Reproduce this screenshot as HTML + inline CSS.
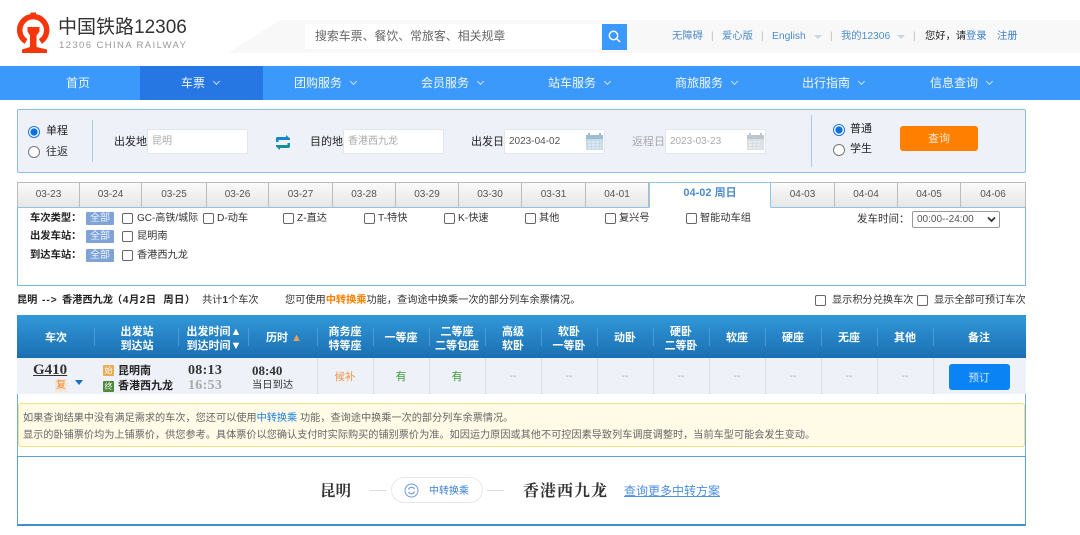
<!DOCTYPE html>
<html lang="zh"><head><meta charset="utf-8"><title>中国铁路12306</title>
<style>
html,body{margin:0;padding:0;background:#fff}
#p{position:relative;width:1080px;height:535px;overflow:hidden;background:#fff;font:11px/14px "Liberation Sans","Noto Sans CJK SC",sans-serif;color:#333;filter:blur(.35px)}
.t{position:absolute;white-space:nowrap}
.c{position:absolute;white-space:nowrap;transform:translateX(-50%);text-align:center}
.b{position:absolute;box-sizing:border-box}
.nav{color:#fff;font-size:12px;top:76px;line-height:15px;opacity:.93}
.ar{display:inline-block;width:4px;height:4px;border-right:1.3px solid #dbeafe;border-bottom:1.3px solid #dbeafe;transform:rotate(45deg);margin:0 0 3px 9px}
.tl{color:#4d8ccd;font-size:10.3px;top:30px}
.sp{color:#bbb;font-size:10px;top:30px}
.tab{position:absolute;top:182px;height:26px;box-sizing:border-box;border:1px solid #bbb;border-left:0;border-bottom:1px solid #8fc4e8;background:linear-gradient(#fafafa,#e6e6e6);text-align:center;line-height:24px;font-size:10px;color:#555}
.cb{position:absolute;width:9px;height:9px;border:1px solid #666;border-radius:2px;background:#fff}
.all{position:absolute;left:86px;width:28px;height:13px;background:#7fa3d6;color:#eaf2ff;font-size:10px;line-height:13px;text-align:center;border-radius:1px}
.fl{position:absolute;left:30px;font-weight:700;color:#222;font-size:10.3px;line-height:14px}
.f{position:absolute;white-space:nowrap;font-size:10.2px;line-height:14px}
.h{color:#fff;font-weight:700;font-size:11px;line-height:13.5px}
.sep{position:absolute;top:328px;width:1px;height:18px;background:#4d9ad4}
.vl{position:absolute;top:358px;width:1px;height:36px;background:#d7dfe9}
.d{color:#aaa;font-size:10px;top:370px}
.r{width:10px;height:10px;border-radius:50%;border:1px solid #777;background:#fff;position:absolute;box-sizing:content-box}
.r.on{border-color:#1a73e8;background:radial-gradient(circle,#0b6fe0 0 3.3px,#fff 3.9px)}
</style></head><body><div id="p">

<svg class="b" style="left:0;top:0" width="70" height="60" viewBox="0 0 70 60">
<path d="M26 41.500A13.500 13.500 0 1 1 40.400 41.500" fill="none" stroke="#f3360c" stroke-width="5.500"/>
<rect x="30.500" y="12.500" width="5.500" height="5" fill="#f3360c"/>
<path d="M27.500 27H39.500V31.500L36.500 35.500V47L47 49.500V53H22V49.500L30 47V35.500L27.500 31.500Z" fill="#f3360c"/>
</svg>
<div class="t" style="left:58px;top:15px;font-size:19px;line-height:26px;color:#333">中国铁路12306</div>
<div class="t" style="left:59px;top:40px;font-size:9.500px;line-height:12px;letter-spacing:1.400px;color:#999">12306 CHINA RAILWAY</div>

<svg class="b" style="left:225px;top:20px" width="855" height="33"><path d="M3 33L55 0H855V33Z" fill="#f8f8f8"/></svg>
<div class="b" style="left:305px;top:24px;width:298px;height:25px;background:#fff"></div>
<div class="t" style="left:315px;top:29px;color:#666;font-size:11.900px">搜索车票、餐饮、常旅客、相关规章</div>
<div class="b" style="left:602px;top:24px;width:25px;height:26px;background:#3b99fc"></div>
<svg class="b" style="left:607px;top:29px" width="15" height="15" viewBox="0 0 15 15"><circle cx="6.500" cy="6.500" r="4.200" fill="none" stroke="#fff" stroke-width="1.500"/><path d="M9.500 9.500L13 13" stroke="#fff" stroke-width="1.500"/></svg>

<span class="t tl" style="left:672px">无障碍</span><span class="t sp" style="left:711px">|</span>
<span class="t tl" style="left:722px">爱心版</span><span class="t sp" style="left:761px">|</span>
<span class="t tl" style="left:772px">English</span>
<div class="b" style="left:814px;top:35px;border:4px solid transparent;border-top:4px solid #c5d6e8;border-bottom:0"></div>
<span class="t sp" style="left:830px">|</span>
<span class="t tl" style="left:841px">我的12306</span>
<div class="b" style="left:897px;top:35px;border:4px solid transparent;border-top:4px solid #c5d6e8;border-bottom:0"></div>
<span class="t sp" style="left:913px">|</span>
<span class="t tl" style="left:925px;color:#222">您好，请</span><span class="t tl" style="left:966px;color:#3b7fd0">登录</span>
<span class="t tl" style="left:997px;color:#3b7fd0">注册</span>

<div class="b" style="left:0;top:66px;width:1080px;height:34px;background:#3b99fc"></div>
<div class="b" style="left:140px;top:66px;width:123px;height:34px;background:#2676e3"></div>
<span class="c nav" style="left:78px">首页</span>
<span class="c nav" style="left:200px">车票<i class="ar"></i></span>
<span class="c nav" style="left:325px">团购服务<i class="ar"></i></span>
<span class="c nav" style="left:452px">会员服务<i class="ar"></i></span>
<span class="c nav" style="left:579px">站车服务<i class="ar"></i></span>
<span class="c nav" style="left:706px">商旅服务<i class="ar"></i></span>
<span class="c nav" style="left:833px">出行指南<i class="ar"></i></span>
<span class="c nav" style="left:961px">信息查询<i class="ar"></i></span>

<div class="b" style="left:17px;top:109px;width:1009px;height:64px;background:#eef1f8;border:1px solid #8fbde0;border-radius:2px"></div>
<i class="r on" style="left:28px;top:126px"></i><span class="t" style="left:46px;top:124px;color:#222">单程</span>
<i class="r" style="left:28px;top:146px"></i><span class="t" style="left:46px;top:145px;color:#333">往返</span>
<div class="b" style="left:92px;top:120px;width:1px;height:42px;background:#a9cbe6"></div>
<span class="t" style="left:114px;top:135px;color:#222">出发地</span>
<div class="b" style="left:147px;top:129px;width:101px;height:25px;background:#fff;border:1px solid #e3e6ec"></div>
<span class="t" style="left:152px;top:135px;color:#aaa;font-size:10px">昆明</span>
<svg class="b" style="left:275px;top:135px" width="16" height="15" viewBox="0 0 16 15"><path d="M1 7V3.500Q1 2 2.500 2H11V0L15 3.500V5H3.500V7Z" fill="#1485cf"/><path d="M15 8V11Q15 13 13.500 13H5V15L1 11.500V10H12.500V8Z" fill="#168f9c"/></svg>
<span class="t" style="left:310px;top:135px;color:#222">目的地</span>
<div class="b" style="left:343px;top:129px;width:101px;height:25px;background:#fff;border:1px solid #e3e6ec"></div>
<span class="t" style="left:348px;top:135px;color:#aaa;font-size:10px">香港西九龙</span>
<span class="t" style="left:471px;top:135px;color:#222">出发日</span>
<div class="b" style="left:504px;top:129px;width:101px;height:25px;background:#fff;border:1px solid #e3e6ec"></div>
<span class="t" style="left:509px;top:135px;color:#555;font-size:10px">2023-04-02</span>
<svg class="b" style="left:585px;top:132px" width="19" height="19" viewBox="0 0 19 19"><rect x="1" y="3" width="17" height="15" fill="#c5d9e8"/><rect x="1" y="3" width="17" height="4" fill="#9dbdd3"/><path d="M4 1V4M15 1V4" stroke="#9dbdd3" stroke-width="2"/><path d="M3 10H16M3 13H16M3 16H16" stroke="#f2f6fa" stroke-dasharray="3 1"/></svg>
<span class="t" style="left:632px;top:135px;color:#aaa">返程日</span>
<div class="b" style="left:665px;top:129px;width:101px;height:25px;background:#fff;border:1px solid #e3e6ec"></div>
<span class="t" style="left:670px;top:135px;color:#aaa;font-size:10px">2023-03-23</span>
<svg class="b" style="left:746px;top:132px" width="19" height="19" viewBox="0 0 19 19"><rect x="1" y="3" width="17" height="15" fill="#d9dfe3"/><rect x="1" y="3" width="17" height="4" fill="#bdc6cc"/><path d="M4 1V4M15 1V4" stroke="#bdc6cc" stroke-width="2"/><path d="M3 10H16M3 13H16M3 16H16" stroke="#f5f6f7" stroke-dasharray="3 1"/></svg>
<div class="b" style="left:811px;top:115px;width:1px;height:52px;background:#a9cbe6"></div>
<i class="r on" style="left:833px;top:124px"></i><span class="t" style="left:850px;top:122px;color:#222">普通</span>
<i class="r" style="left:833px;top:144px"></i><span class="t" style="left:850px;top:142px;color:#222">学生</span>
<div class="b" style="left:900px;top:126px;width:78px;height:25px;background:#ff8000;border-radius:3px"></div>
<span class="c" style="left:939px;top:132px;color:#ffe7cf">查询</span>

<div class="b" style="left:17px;top:207px;width:1009px;height:79px;border:1px solid #7db5dc;background:#fff"></div>
<div class="tab" style="left:17px;width:63px;border-left:1px solid #bbb">03-23</div>
<div class="tab" style="left:80px;width:62px">03-24</div>
<div class="tab" style="left:142px;width:65px">03-25</div>
<div class="tab" style="left:207px;width:62px">03-26</div>
<div class="tab" style="left:269px;width:64px">03-27</div>
<div class="tab" style="left:333px;width:63px">03-28</div>
<div class="tab" style="left:396px;width:63px">03-29</div>
<div class="tab" style="left:459px;width:63px">03-30</div>
<div class="tab" style="left:522px;width:64px">03-31</div>
<div class="tab" style="left:586px;width:63px">04-01</div>
<div class="tab" style="left:649px;width:122px;background:#fff;border:1px solid #8fc4e8;border-bottom:1px solid #fff;color:#4a8ccc;font-weight:700;font-size:11px;line-height:20px">04-02 周日</div>
<div class="tab" style="left:771px;width:64px">04-03</div>
<div class="tab" style="left:835px;width:63px">04-04</div>
<div class="tab" style="left:898px;width:63px">04-05</div>
<div class="tab" style="left:961px;width:65px">04-06</div>

<span class="fl" style="top:212px">车次类型：</span><span class="all" style="top:212px">全部</span>
<span class="fl" style="top:230px">出发车站：</span><span class="all" style="top:230px">全部</span>
<span class="fl" style="top:249px">到达车站：</span><span class="all" style="top:249px">全部</span>
<i class="cb" style="left:122px;top:213px"></i><span class="f" style="left:137px;top:212px;font-size:10px">GC-高铁/城际</span>
<i class="cb" style="left:203px;top:213px"></i><span class="f" style="left:217px;top:212px">D-动车</span>
<i class="cb" style="left:283px;top:213px"></i><span class="f" style="left:297px;top:212px">Z-直达</span>
<i class="cb" style="left:364px;top:213px"></i><span class="f" style="left:378px;top:212px">T-特快</span>
<i class="cb" style="left:444px;top:213px"></i><span class="f" style="left:458px;top:212px">K-快速</span>
<i class="cb" style="left:525px;top:213px"></i><span class="f" style="left:539px;top:212px">其他</span>
<i class="cb" style="left:605px;top:213px"></i><span class="f" style="left:619px;top:212px">复兴号</span>
<i class="cb" style="left:686px;top:213px"></i><span class="f" style="left:700px;top:212px">智能动车组</span>
<span class="t" style="left:857px;top:212px;font-size:10.5px">发车时间：</span>
<div class="b" style="left:912px;top:211px;width:88px;height:17px;border:1px solid #999;border-radius:2px;background:#fff"></div>
<span class="t" style="left:917px;top:213px;font-size:10px;color:#555">00:00--24:00</span>
<svg class="b" style="left:987px;top:216px" width="9" height="7"><path d="M1 1.500L4.500 5L8 1.500" fill="none" stroke="#333" stroke-width="1.800"/></svg>
<i class="cb" style="left:122px;top:231px"></i><span class="f" style="left:137px;top:230px">昆明南</span>
<i class="cb" style="left:122px;top:250px"></i><span class="f" style="left:137px;top:249px">香港西九龙</span>

<span class="f" style="left:17px;top:294px;font-weight:700;color:#222">昆明</span>
<span class="f" style="left:42px;top:294px;font-weight:700;color:#222;letter-spacing:1px">--&gt;</span>
<span class="f" style="left:62px;top:294px;font-weight:700;color:#222">香港西九龙</span>
<span class="f" style="left:112px;top:294px;font-weight:700;color:#222;letter-spacing:.55px">（4月2日&nbsp; 周日）</span>
<span class="f" style="left:202px;top:294px">共计<b>1</b>个车次</span>
<div class="f" style="left:285px;top:294px">您可使用<b style="color:#ff8000">中转换乘</b>功能，查询途中换乘一次的部分列车余票情况。</div>
<i class="cb" style="left:815px;top:295px"></i><span class="f" style="left:832px;top:294px">显示积分兑换车次</span>
<i class="cb" style="left:917px;top:295px"></i><span class="f" style="left:934px;top:294px">显示全部可预订车次</span>

<div class="b" style="left:17px;top:315px;width:1009px;height:43px;background:linear-gradient(#3298d9,#1a6fb2)"></div>
<span class="c h" style="left:56px;top:332px">车次</span>
<span class="c h" style="left:137px;top:326px">出发站<br>到达站</span>
<span class="c h" style="left:214px;top:326px">出发时间▲<br>到达时间▼</span>
<span class="c h" style="left:284px;top:332px">历时 <span style="color:#f0a050">▲</span></span>
<span class="c h" style="left:345px;top:326px">商务座<br>特等座</span>
<span class="c h" style="left:401px;top:332px">一等座</span>
<span class="c h" style="left:457px;top:326px">二等座<br>二等包座</span>
<span class="c h" style="left:513px;top:326px">高级<br>软卧</span>
<span class="c h" style="left:569px;top:326px">软卧<br>一等卧</span>
<span class="c h" style="left:625px;top:332px">动卧</span>
<span class="c h" style="left:681px;top:326px">硬卧<br>二等卧</span>
<span class="c h" style="left:737px;top:332px">软座</span>
<span class="c h" style="left:793px;top:332px">硬座</span>
<span class="c h" style="left:849px;top:332px">无座</span>
<span class="c h" style="left:905px;top:332px">其他</span>
<span class="c h" style="left:979px;top:332px">备注</span>
<i class="sep" style="left:94px"></i><i class="sep" style="left:178px"></i><i class="sep" style="left:248px"></i><i class="sep" style="left:317px"></i><i class="sep" style="left:373px"></i><i class="sep" style="left:429px"></i><i class="sep" style="left:485px"></i><i class="sep" style="left:541px"></i><i class="sep" style="left:597px"></i><i class="sep" style="left:653px"></i><i class="sep" style="left:709px"></i><i class="sep" style="left:765px"></i><i class="sep" style="left:821px"></i><i class="sep" style="left:877px"></i><i class="sep" style="left:933px"></i>

<div class="b" style="left:17px;top:358px;width:1009px;height:36px;background:#eef1f8"></div>
<i class="vl" style="left:317px"></i><i class="vl" style="left:373px"></i><i class="vl" style="left:429px"></i><i class="vl" style="left:485px"></i><i class="vl" style="left:541px"></i><i class="vl" style="left:597px"></i><i class="vl" style="left:653px"></i><i class="vl" style="left:709px"></i><i class="vl" style="left:765px"></i><i class="vl" style="left:821px"></i><i class="vl" style="left:877px"></i><i class="vl" style="left:933px"></i>
<span class="t" style="left:33px;top:362px;font:700 15px/17px 'Liberation Serif',serif;color:#333;text-decoration:underline">G410</span>
<span class="b" style="left:55px;top:379px;width:12px;height:13px;color:#f08a30;font-size:10px;line-height:13px;text-align:center;background:#f6e8d8">复</span>
<div class="b" style="left:75px;top:380px;border:4px solid transparent;border-top:5px solid #1a6fc8;border-bottom:0"></div>
<span class="b" style="left:103px;top:365px;width:11px;height:11px;background:#e6ad55;color:#fff;font-size:8px;line-height:11px;text-align:center;border-radius:1px">始</span>
<span class="t" style="left:118px;top:364px;font-weight:700;font-size:11px;color:#222">昆明南</span>
<span class="b" style="left:103px;top:381px;width:11px;height:11px;background:#4f8a3a;color:#fff;font-size:8px;line-height:11px;text-align:center;border-radius:1px">终</span>
<span class="t" style="left:118px;top:379px;font-weight:700;font-size:11px;color:#222">香港西九龙</span>
<span class="t" style="left:188px;top:363px;font:700 14px/15px 'Liberation Serif',serif;letter-spacing:.3px;color:#333">08:13</span>
<span class="t" style="left:188px;top:378px;font:700 14px/15px 'Liberation Serif',serif;letter-spacing:.3px;color:#aaa">16:53</span>
<span class="t" style="left:252px;top:364px;font:700 13px/14px 'Liberation Serif',serif;color:#333">08:40</span>
<span class="t" style="left:252px;top:379px;font-size:10.300px">当日到达</span>
<span class="c" style="left:345px;top:370px;color:#f0954a;font-size:10.500px">候补</span>
<span class="c" style="left:401px;top:370px;color:#3d9a3d">有</span>
<span class="c" style="left:457px;top:370px;color:#3d9a3d">有</span>
<span class="c d" style="left:513px">--</span><span class="c d" style="left:569px">--</span><span class="c d" style="left:625px">--</span><span class="c d" style="left:681px">--</span><span class="c d" style="left:737px">--</span><span class="c d" style="left:793px">--</span><span class="c d" style="left:849px">--</span><span class="c d" style="left:905px">--</span>
<div class="b" style="left:949px;top:364px;width:61px;height:26px;background:#0a84f5;border-radius:3px"></div>
<span class="c" style="left:979px;top:371px;color:#d5e9ff;font-size:10.500px">预订</span>

<div class="b" style="left:17px;top:394px;width:1009px;height:131px;border:1px solid #6bb0e0;border-top:0;border-bottom:0"></div>
<div class="b" style="left:18px;top:403px;width:1007px;height:44px;background:#fffbe6;border:1px solid #f3e07e;border-radius:3px"></div>
<div class="t" style="left:23px;top:412px;font-size:10.170px;color:#666">如果查询结果中没有满足需求的车次，您还可以使用<span style="color:#1a7fe0">中转换乘</span> 功能，查询途中换乘一次的部分列车余票情况。</div>
<div class="t" style="left:23px;top:429px;font-size:10.170px;color:#666">显示的卧铺票价均为上铺票价，供您参考。具体票价以您确认支付时实际购买的铺别票价为准。如因运力原因或其他不可控因素导致列车调度调整时，当前车型可能会发生变动。</div>

<div class="b" style="left:17px;top:456px;width:1009px;height:70px;background:#fff;border:1px solid #5b9fd6;border-bottom:2px solid #3f8fcf"></div>
<span class="t" style="left:320px;top:480px;font:700 15.500px/20px 'Noto Serif CJK SC',serif;color:#333">昆明</span>
<div class="b" style="left:369px;top:490px;width:18px;height:1px;background:#ddd"></div>
<div class="b" style="left:391px;top:477px;width:92px;height:26px;border:1px solid #e5e8ee;border-radius:13px;background:#fff"></div>
<svg class="b" style="left:404px;top:483px" width="15" height="15" viewBox="0 0 15 15"><circle cx="7.500" cy="7.500" r="6.500" fill="none" stroke="#6f9be0"/><path d="M10.500 6A3.300 3.300 0 0 0 4.500 6.500M4.500 9A3.300 3.300 0 0 0 10.500 8.500" fill="none" stroke="#6f9be0" stroke-width="1.200"/></svg>
<span class="t" style="left:429px;top:485px;color:#3b7fd8;font-size:10px">中转换乘</span>
<div class="b" style="left:487px;top:490px;width:17px;height:1px;background:#ddd"></div>
<span class="t" style="left:523px;top:480px;font:700 16px/20px 'Noto Serif CJK SC',serif;letter-spacing:1px;color:#333">香港西九龙</span>
<span class="t" style="left:624px;top:484px;color:#4d8fe0;text-decoration:underline;font-size:12px">查询更多中转方案</span>

</div></body></html>
